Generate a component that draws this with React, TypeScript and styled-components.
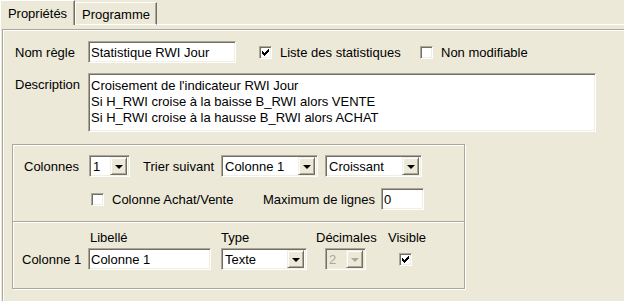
import React from "react";
import styled, { createGlobalStyle, css } from "styled-components";

const Global = createGlobalStyle`
  html, body { margin: 0; padding: 0; background: #ECE9D8; }
  body {
    width: 624px; height: 301px; overflow: hidden;
    font-family: "Liberation Sans", Arial, sans-serif;
    font-size: 13px; color: #000;
  }
  #root { width: 624px; height: 301px; }
`;

const Window = styled.div`
  width: 624px;
  height: 301px;
  overflow: hidden;
  display: flex;
  flex-direction: column;
  background: #ECE9D8;
`;

const TabBar = styled.div`
  display: flex;
  align-items: flex-end;
  height: 25px;
  flex-shrink: 0;
`;

const Tab = styled.div<{ $active?: boolean }>`
  box-sizing: border-box;
  display: flex;
  align-items: center;
  justify-content: center;
  background: #ECE9D8;
  border-top: 1px solid #fff;
  border-left: 1px solid #fff;
  border-right: 1px solid #716F64;
  box-shadow: inset -1px 0 0 #ACA899;
  line-height: 15px;
  ${(p) =>
    p.$active
      ? css`
          width: 75px;
          height: 25px;
          padding-bottom: 0px;
        `
      : css`
          width: 82px;
          height: 23px;
          border-bottom: 1px solid #fff;
          padding-top: 1px;
        `}
`;

const TabFiller = styled.div`
  flex: 1;
  height: 0;
  border-bottom: 1px solid #fff;
`;

const Page = styled.div`
  flex: 1;
  display: flex;
  border-left: 1px solid #fff;
  padding: 4px 0 0 1px;
`;

const Panel = styled.div`
  flex: 1;
  border-top: 1px solid #ACA899;
  border-left: 1px solid #ACA899;
  box-shadow: inset 1px 1px 0 #fff;
  padding: 11px 0 0 9px;
`;

const TopForm = styled.div`
  padding-left: 3px;
  display: flex;
  flex-direction: column;
`;

const Row = styled.div<{ $mt?: number; $h?: number; $pl?: number }>`
  display: flex;
  align-items: center;
  margin-top: ${(p) => p.$mt ?? 0}px;
  padding-left: ${(p) => p.$pl ?? 0}px;
  ${(p) => (p.$h ? `height: ${p.$h}px;` : "")}
`;

const Label = styled.span<{ $w?: number; $ml?: number; $top?: number }>`
  display: inline-block;
  line-height: 15px;
  white-space: nowrap;
  ${(p) => (p.$w ? `width: ${p.$w}px; flex-shrink: 0;` : "")}
  margin-left: ${(p) => p.$ml ?? 0}px;
  ${(p) => (p.$top !== undefined ? `align-self: flex-start; margin-top: ${p.$top}px;` : "")}
`;

const sunken = css`
  box-sizing: border-box;
  border: 1px solid;
  border-color: #ACA899 #fff #fff #ACA899;
  box-shadow: inset 1px 1px 0 #716F64, inset -1px -1px 0 #F1EFE2;
`;

const TextInput = styled.div<{ $w: number }>`
  ${sunken}
  width: ${(p) => p.$w}px;
  height: 22px;
  background: #fff;
  padding: 0 0 0 2px;
  display: flex;
  align-items: center;
  line-height: 15px;
  white-space: nowrap;
  overflow: hidden;
  flex-shrink: 0;
`;

const TextArea = styled.div`
  ${sunken}
  width: 508px;
  height: 59px;
  background: #fff;
  padding: 4px 0 0 2px;
  line-height: 16px;
  white-space: pre;
  flex-shrink: 0;
`;

const SelectBox = styled.div<{ $w: number; $disabled?: boolean }>`
  ${sunken}
  width: ${(p) => p.$w}px;
  height: 22px;
  display: flex;
  align-items: center;
  flex-shrink: 0;
  padding: 2px 2px 2px 2px;
  background: ${(p) => (p.$disabled ? "#ECE9D8" : "#fff")};
  color: ${(p) => (p.$disabled ? "#ACA899" : "#000")};
`;

const SelectText = styled.span`
  flex: 1;
  line-height: 15px;
  padding-left: 1px;
  white-space: nowrap;
  overflow: hidden;
`;

const DropButton = styled.div`
  box-sizing: border-box;
  width: 17px;
  height: 18px;
  background: #ECE9D8;
  border: 1px solid;
  border-color: #F1EFE2 #716F64 #716F64 #F1EFE2;
  box-shadow: inset 1px 1px 0 #fff, inset -1px -1px 0 #ACA899;
  display: flex;
  align-items: center;
  justify-content: center;
`;

const Arrow = styled.div<{ $disabled?: boolean }>`
  width: 0;
  height: 0;
  border-left: 4px solid transparent;
  border-right: 4px solid transparent;
  border-top: 4px solid ${(p) => (p.$disabled ? "#ACA899" : "#000")};
  margin-top: 1px;
`;

const CheckBox = styled.div<{ $ml?: number }>`
  ${sunken}
  width: 13px;
  height: 13px;
  background: #fff;
  flex-shrink: 0;
  margin-left: ${(p) => p.$ml ?? 0}px;
  display: flex;
`;

const CheckItem = styled.div<{ $ml?: number; $w?: number }>`
  display: flex;
  align-items: center;
  gap: 8px;
  margin-left: ${(p) => p.$ml ?? 0}px;
  ${(p) => (p.$w ? `width: ${p.$w}px; flex-shrink: 0;` : "")}
`;

const GroupBox = styled.div`
  margin-top: 12px;
  width: 453px;
  box-sizing: border-box;
  border: 1px solid #ACA899;
  box-shadow: inset 1px 1px 0 #fff, 1px 1px 0 #fff;
`;

const Section = styled.div<{ $divider?: boolean; $pad: string }>`
  padding: ${(p) => p.$pad};
  ${(p) =>
    p.$divider
      ? css`
          border-top: 1px solid #ACA899;
          box-shadow: inset 0 1px 0 #fff;
        `
      : ""}
`;

const Cell = styled.div<{ $w: number; $pl?: number }>`
  width: ${(p) => p.$w}px;
  flex-shrink: 0;
  box-sizing: border-box;
  padding-left: ${(p) => p.$pl ?? 0}px;
  display: flex;
  align-items: center;
  line-height: 15px;
  white-space: nowrap;
`;

const Check = () => (
  <svg width="11" height="11" viewBox="0 0 11 11" shapeRendering="crispEdges">
    <path
      d="M2 4 H3 V5 H4 V6 H5 V5 H6 V4 H7 V3 H8 V2 H9 V5 H8 V6 H7 V7 H6 V8 H5 V9 H4 V8 H3 V7 H2 Z"
      fill="#000"
    />
  </svg>
);

const Select = ({ w, value, disabled }: { w: number; value: string; disabled?: boolean }) => (
  <SelectBox $w={w} $disabled={disabled}>
    <SelectText>{value}</SelectText>
    <DropButton>
      <Arrow $disabled={disabled} />
    </DropButton>
  </SelectBox>
);

export default function App() {
  return (
    <>
      <Global />
      <Window>
        <TabBar>
          <Tab $active>Propriétés</Tab>
          <Tab>Programme</Tab>
          <TabFiller />
        </TabBar>
        <Page>
          <Panel>
            <TopForm>
              <Row $h={22}>
                <Label $w={73}>Nom règle</Label>
                <TextInput $w={148}>Statistique RWI Jour</TextInput>
                <CheckItem $ml={23} $w={161}>
                  <CheckBox>
                    <Check />
                  </CheckBox>
                  <span>Liste des statistiques</span>
                </CheckItem>
                <CheckItem>
                  <CheckBox />
                  <span>Non modifiable</span>
                </CheckItem>
              </Row>
              <Row $mt={10}>
                <Label $w={73} $top={4}>
                  Description
                </Label>
                <TextArea>
                  {"Croisement de l'indicateur RWI Jour\nSi H_RWI croise à la baisse B_RWI alors VENTE\nSi H_RWI croise à la hausse B_RWI alors ACHAT"}
                </TextArea>
              </Row>
            </TopForm>
            <GroupBox>
              <Section $pad="10px 0 11px 11px">
                <Row $h={22}>
                  <Label $w={65}>Colonnes</Label>
                  <Select w={41} value="1" />
                  <Label $w={78} $ml={13}>
                    Trier suivant
                  </Label>
                  <Select w={97} value="Colonne 1" />
                  <CheckItem $ml={7}>
                    <Select w={97} value="Croissant" />
                  </CheckItem>
                </Row>
                <Row $h={22} $mt={11} $pl={67}>
                  <CheckItem $w={172}>
                    <CheckBox />
                    <span>Colonne Achat/Vente</span>
                  </CheckItem>
                  <Label $w={118}>Maximum de lignes</Label>
                  <TextInput $w={43}>0</TextInput>
                </Row>
              </Section>
              <Section $divider $pad="8px 0 18px 9px">
                <Row $h={15}>
                  <Cell $w={66} />
                  <Cell $w={133} $pl={2}>
                    Libellé
                  </Cell>
                  <Cell $w={95}>Type</Cell>
                  <Cell $w={72}>Décimales</Cell>
                  <Cell $w={45}>Visible</Cell>
                </Row>
                <Row $h={22} $mt={3}>
                  <Cell $w={66}>Colonne 1</Cell>
                  <Cell $w={133}>
                    <TextInput $w={123}>Colonne 1</TextInput>
                  </Cell>
                  <Cell $w={95}>
                    <Select w={86} value="Texte" />
                  </Cell>
                  <Cell $w={72} $pl={9}>
                    <Select w={41} value="2" disabled />
                  </Cell>
                  <Cell $w={45} $pl={11}>
                    <CheckBox>
                      <Check />
                    </CheckBox>
                  </Cell>
                </Row>
              </Section>
            </GroupBox>
          </Panel>
        </Page>
      </Window>
    </>
  );
}
